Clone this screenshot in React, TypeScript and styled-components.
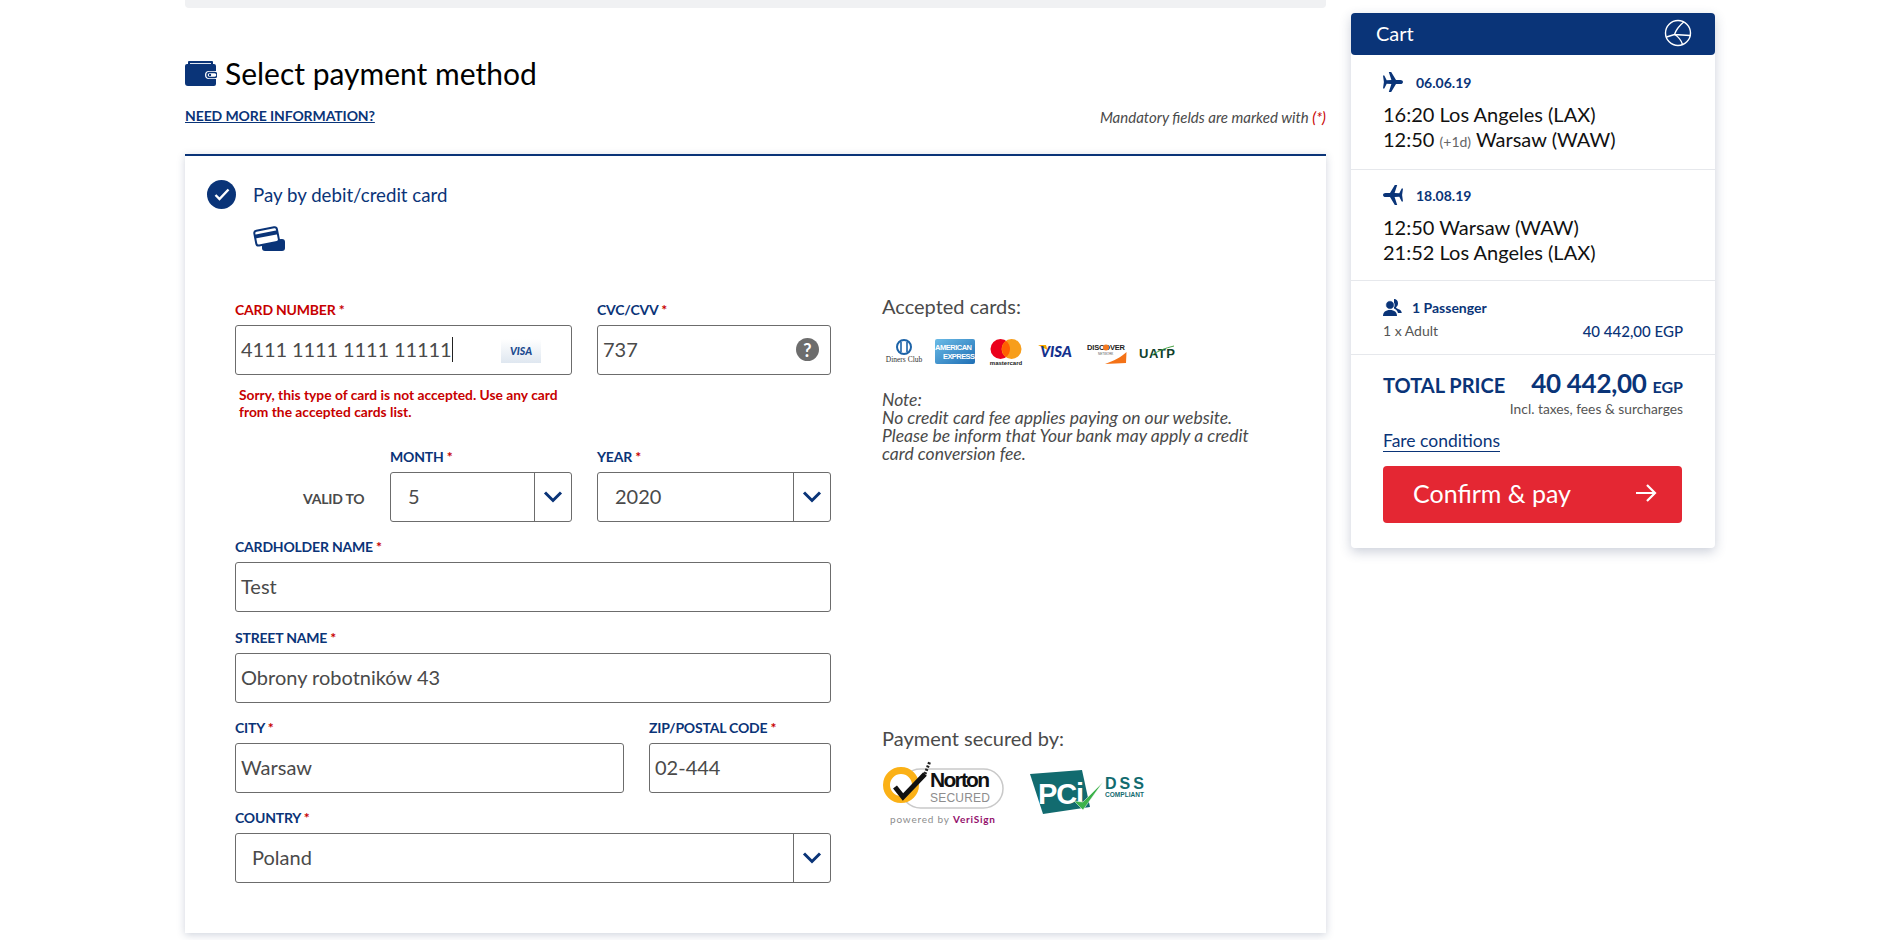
import React from 'react';
import styled, { createGlobalStyle } from 'styled-components';

const NAVY = '#0a3478';
const TEXT = '#4a4a4a';
const RED = '#c70000';

const GlobalStyle = createGlobalStyle`
  html, body {
    margin: 0;
    padding: 0;
    background: #fff;
    overflow: hidden;
    font-family: Lato, "Open Sans", sans-serif;
    color: ${TEXT};
  }
  * { box-sizing: border-box; }
`;

const Page = styled.div`
  display: flex;
  align-items: flex-start;
  gap: 25px;
  width: 1898px;
  height: 940px;
  padding-left: 185px;
`;

const Main = styled.main`
  width: 1141px;
  flex: none;
`;

const TopBar = styled.div`
  height: 8px;
  background: #f0f1f3;
  border-radius: 0 0 4px 4px;
`;

const Title = styled.h1`
  display: flex;
  align-items: center;
  gap: 8px;
  margin: 49px 0 0;
  height: 32px;
  font-size: 30px;
  line-height: 32px;
  font-weight: 400;
  color: #000;
`;

const InfoRow = styled.div`
  display: flex;
  justify-content: space-between;
  align-items: flex-start;
  margin-top: 19px;
  height: 46px;
`;

const InfoLink = styled.a`
  font-size: 14px;
  line-height: 16px;
  font-weight: 700;
  letter-spacing: -0.1px;
  color: ${NAVY};
  text-decoration: underline;
`;

const Mandatory = styled.span`
  margin-top: 1px;
  font-size: 15px;
  line-height: 16px;
  font-style: italic;
  color: ${TEXT};
`;

const Star = styled.span`
  color: ${RED};
`;

const PaymentCard = styled.section`
  height: 779px;
  border-top: 2px solid ${NAVY};
  background: #fff;
  box-shadow: 0 2px 8px rgba(40, 60, 100, 0.22);
  padding: 24px 0 0 22px;
`;

const MethodHead = styled.div`
  display: flex;
  align-items: center;
  gap: 17px;
  height: 28px;
  font-size: 18.7px;
  color: ${NAVY};
`;

const MethodName = styled.span`
  margin-top: 2px;
`;

const CheckDot = styled.span`
  display: flex;
  align-items: center;
  justify-content: center;
  width: 29px;
  height: 29px;
  border-radius: 50%;
  background: ${NAVY};
`;

const MethodIcon = styled.div`
  margin: 17px 0 0 46px;
  height: 26px;
`;

const FormArea = styled.div`
  display: flex;
  margin: 51px 0 0 28px;
`;

const FormColumn = styled.div`
  width: 596px;
  display: flex;
  flex-direction: column;
  flex: none;
`;

const Row = styled.div<{ $top?: number }>`
  display: flex;
  gap: 25px;
  margin-top: ${(p) => p.$top ?? 17}px;
`;

const Field = styled.div<{ $width?: number }>`
  width: ${(p) => (p.$width ? `${p.$width}px` : 'auto')};
  flex: ${(p) => (p.$width ? 'none' : 1)};
`;

const Label = styled.label<{ $error?: boolean }>`
  display: block;
  height: 23px;
  font-size: 14px;
  line-height: 16px;
  font-weight: 700;
  white-space: nowrap;
  letter-spacing: -0.2px;
  color: ${(p) => (p.$error ? RED : NAVY)};
`;

const InputBox = styled.div`
  display: flex;
  align-items: center;
  position: relative;
  height: 50px;
  padding: 0 0 2px 5px;
  border: 1px solid #6c6c6c;
  border-radius: 3px;
  font-size: 20px;
  color: ${TEXT};
  background: #fff;
`;

const CardDigits = styled.span`
  letter-spacing: -0.1px;
  white-space: pre;
`;

const Caret = styled.span`
  display: inline-block;
  width: 1px;
  height: 25px;
  background: #222;
`;

const CardBrandChip = styled.span`
  position: absolute;
  left: 265px;
  top: 13px;
`;

const HelpMark = styled.span`
  position: absolute;
  right: 11px;
  top: 12px;
  width: 23px;
  height: 23px;
  display: flex;
  align-items: center;
  justify-content: center;
  border-radius: 50%;
  background: #6d6d6d;
  color: #fff;
  font-size: 18px;
  font-weight: 700;
`;

const ErrorText = styled.div`
  margin: 11px 0 0 4px;
  width: 330px;
  font-size: 13.8px;
  line-height: 17px;
  font-weight: 700;
  color: ${RED};
`;

const ValidLabel = styled.div`
  width: 155px;
  flex: none;
  padding: 42px 0 0 68px;
  margin-right: -25px;
  font-size: 14px;
  line-height: 16px;
  font-weight: 700;
  letter-spacing: -0.2px;
  color: ${TEXT};
  white-space: nowrap;
`;

const SelectBox = styled(InputBox)<{ $indent?: number }>`
  padding-left: ${(p) => p.$indent ?? 17}px;
`;

const SelectArrow = styled.span`
  position: absolute;
  top: 0;
  right: 0;
  bottom: 0;
  width: 37px;
  display: flex;
  align-items: center;
  justify-content: center;
  border-left: 1px solid #6c6c6c;
`;

const SideColumn = styled.aside`
  width: 370px;
  margin: -8px 0 0 51px;
  display: flex;
  flex-direction: column;
  flex: none;
`;

const SideTitle = styled.div<{ $top?: number }>`
  margin-top: ${(p) => p.$top ?? 0}px;
  font-size: 20px;
  line-height: 24px;
  color: ${TEXT};
`;

const CardLogos = styled.div`
  display: flex;
  align-items: center;
  margin-top: 20px;
  height: 28px;
`;

const Note = styled.p`
  margin: 25px 0 0;
  font-size: 17.5px;
  line-height: 18px;
  font-style: italic;
  color: ${TEXT};
`;

const SecureLogos = styled.div`
  display: flex;
  gap: 24px;
  margin-top: 9px;
`;

const Cart = styled.aside`
  width: 364px;
  flex: none;
  margin-top: 13px;
  height: 535px;
  border-radius: 4px;
  background: #fff;
  box-shadow: 0 4px 12px rgba(40, 60, 100, 0.24);
`;

const CartHead = styled.header`
  display: flex;
  align-items: center;
  justify-content: space-between;
  height: 42px;
  padding: 0 23px 2px 25px;
  border-radius: 4px;
  background: ${NAVY};
  color: #fff;
  font-size: 20px;
`;

const FlightBlock = styled.div<{ $height: number; $top: number }>`
  height: ${(p) => p.$height}px;
  padding: ${(p) => p.$top}px 32px 0;
  border-bottom: 1px solid #e6e8ec;
`;

const FlightDate = styled.div`
  display: flex;
  align-items: center;
  gap: 13px;
  height: 20px;
  font-size: 14px;
  font-weight: 700;
  color: ${NAVY};
`;

const FlightLines = styled.div`
  margin-top: 10px;
  font-size: 20px;
  line-height: 25px;
  color: #111;
`;

const DayShift = styled.small`
  font-size: 14px;
  color: #666;
`;

const PassengerBlock = styled.div`
  height: 74px;
  padding: 16px 32px 0;
  border-bottom: 1px solid #e6e8ec;
`;

const PassengerHead = styled.div`
  display: flex;
  align-items: center;
  gap: 10px;
  height: 20px;
  font-size: 14px;
  font-weight: 700;
  color: ${NAVY};
`;

const PassengerRow = styled.div`
  display: flex;
  justify-content: space-between;
  margin-top: 5px;
  font-size: 14px;
  line-height: 18px;
  color: #555;
`;

const PassengerPrice = styled.span`
  font-size: 15px;
  font-weight: 500;
  color: ${NAVY};
`;

const TotalBlock = styled.div`
  padding: 9px 32px 0;
`;

const TotalRow = styled.div`
  display: flex;
  justify-content: space-between;
  align-items: baseline;
  height: 37px;
  font-size: 20px;
  line-height: 38px;
  font-weight: 700;
  color: ${NAVY};
`;

const TotalPrice = styled.span`
  font-size: 26px;
  letter-spacing: -0.3px;
`;

const Currency = styled.span`
  font-size: 16px;
  margin-left: 6px;
`;

const TaxNote = styled.div`
  text-align: right;
  font-size: 13.8px;
  line-height: 16px;
  color: #555;
`;

const FareLink = styled.a`
  display: inline-block;
  margin-top: 14px;
  font-size: 17.5px;
  line-height: 20px;
  color: ${NAVY};
  border-bottom: 1px solid ${NAVY};
`;

const PayButton = styled.button`
  display: flex;
  align-items: center;
  justify-content: space-between;
  width: 299px;
  height: 57px;
  margin-top: 14px;
  padding: 0 25px 3px 30px;
  border: 0;
  border-radius: 4px;
  background: #e42733;
  color: #fff;
  font-family: inherit;
  font-size: 25px;
`;

const WalletIcon = () => (
  <svg width="32" height="27" viewBox="0 0 32 27">
    <rect x="3" y="1" width="25" height="6" rx="1" fill={NAVY} />
    <rect x="5" y="3" width="21" height="2" fill="#dfe6f2" />
    <path d="M0 6a2 2 0 0 1 2-2h27a2 2 0 0 1 2 2v5H24a4 4 0 0 0 0 8h7v5a2 2 0 0 1-2 2H3a3 3 0 0 1-3-3z" fill={NAVY} />
    <rect x="22" y="12.5" width="10" height="5" rx="2.5" fill="none" stroke={NAVY} strokeWidth="1.4" />
    <circle cx="25" cy="15" r="1.2" fill={NAVY} />
  </svg>
);

const CardsIcon = () => (
  <svg width="32" height="26" viewBox="0 0 32 26">
    <path d="M9 15l20-1a3 3 0 0 1 3 3v6a3 3 0 0 1-3 3H12a3 3 0 0 1-3-3z" fill={NAVY} />
    <g transform="rotate(-11 13 11)">
      <rect x="2" y="4" width="23" height="15" rx="2.5" fill="#fff" stroke={NAVY} strokeWidth="2" />
      <rect x="2" y="7.5" width="23" height="4" fill={NAVY} />
    </g>
  </svg>
);

const Chevron = () => (
  <svg width="20" height="14" viewBox="0 0 20 14">
    <path d="M2 2.5l8 8 8-8" fill="none" stroke={NAVY} strokeWidth="3" />
  </svg>
);

const PlaneIcon = ({ back }: { back?: boolean }) => (
  <svg width="20" height="20" viewBox="0 0 20 20" style={back ? { transform: 'scaleX(-1)' } : undefined}>
    <path
      d="M0 3.500h1.300l2.400 4.700 4.700-.2L5.800 0h2.400l4.800 8 4.400-.1c1.500 0 2.600.9 2.600 2.100s-1.100 2.100-2.600 2.100l-4.400-.1L8.200 20H5.800l2.600-8-4.700-.2-2.400 4.700H0l.9-6.500z"
      fill={NAVY}
    />
  </svg>
);

const PassengerIcon = () => (
  <svg width="19" height="17" viewBox="0 0 19 17">
    <path d="M11 0c2.500 0 4 1.800 4 4.300 0 1.800-.8 3.200-2 4 .2.800.8 1.200 2 1.600 2 .6 3.500 1.500 3.800 4.100H15c-.6-2.300-2-3.600-4-4.500z" fill={NAVY} />
    <circle cx="7" cy="6" r="4.300" fill={NAVY} stroke="#fff" strokeWidth="0.8" />
    <path d="M0 17c0-3.800 2.500-6 7-6s7 2.200 7 6z" fill={NAVY} />
  </svg>
);

const LotLogo = () => (
  <svg width="28" height="28" viewBox="0 0 28 28" fill="none" stroke="#fff" strokeWidth="1.4">
    <circle cx="14" cy="14" r="12.500" />
    <path d="M20 2.800C15.500 6.500 12 11 10.500 15.500L26.300 16.500M10.500 15.500c3.500 2 6.500 5 8 10M10.500 15.500L2.500 18" />
  </svg>
);

const VisaChip = () => (
  <svg width="40" height="24" viewBox="0 0 40 24">
    <defs>
      <linearGradient id="chip" x1="0" y1="0" x2="0" y2="1">
        <stop offset="0" stopColor="#ffffff" />
        <stop offset="1" stopColor="#dfe7f0" />
      </linearGradient>
    </defs>
    <rect width="40" height="24" fill="url(#chip)" />
    <text x="20" y="16" textAnchor="middle" fontFamily="Lato" fontStyle="italic" fontWeight="900" fontSize="10.500" fill="#1a4a8f">
      VISA
    </text>
  </svg>
);

const CardsStrip = () => (
  <svg width="296" height="28" viewBox="0 0 296 28">
    {/* diners */}
    <circle cx="22" cy="9" r="7" fill="#fff" stroke="#1c63a8" strokeWidth="2" />
    <path d="M19 4v10M25 4v10" stroke="#1c63a8" strokeWidth="1.600" />
    <text x="22" y="24" textAnchor="middle" fontFamily="Liberation Serif" fontSize="7.500" fill="#333">
      Diners Club
    </text>
    {/* amex */}
    <defs>
      <linearGradient id="amex" x1="0" y1="0" x2="1" y2="1">
        <stop offset="0" stopColor="#6bbbe6" />
        <stop offset="1" stopColor="#1f6fb5" />
      </linearGradient>
    </defs>
    <rect x="53" y="1" width="40" height="25" rx="2" fill="url(#amex)" />
    <text x="53" y="12" fontFamily="Liberation Sans" fontWeight="700" fontSize="7.500" fill="#fff" textLength="37">
      AMERICAN
    </text>
    <text x="61" y="21" fontFamily="Liberation Sans" fontWeight="700" fontSize="7.500" fill="#fff" textLength="32">
      EXPRESS
    </text>
    {/* mastercard */}
    <circle cx="118.500" cy="11" r="10" fill="#eb001b" />
    <circle cx="129.500" cy="11" r="10" fill="#f79e1b" />
    <path d="M124 3a10 10 0 0 1 0 16 10 10 0 0 1 0-16z" fill="#ff5f00" />
    <text x="124" y="27" textAnchor="middle" fontFamily="Liberation Sans" fontSize="6" fontWeight="700" fill="#222">
      mastercard
    </text>
    {/* visa */}
    <path d="M156 7h8l1.500 5z" fill="#f7a600" />
    <text x="174" y="19" textAnchor="middle" fontFamily="Lato" fontStyle="italic" fontWeight="900" fontSize="15" fill="#14308c">
      VISA
    </text>
    {/* discover */}
    <text x="205" y="12" fontFamily="Liberation Sans" fontWeight="700" fontSize="7.500" fill="#222" textLength="38">
      DISCOVER
    </text>
    <text x="216" y="17" fontFamily="Liberation Sans" fontSize="3" fill="#555">
      NETWORK
    </text>
    <circle cx="224" cy="9.500" r="3" fill="#f47a20" />
    <path d="M223 26l21-1 .5-11c-5 5-13 9-21.500 12z" fill="#f47216" />
    {/* uatp */}
    <text x="257" y="20" fontFamily="Liberation Sans" fontWeight="700" fontSize="13" fill="#103f2d" textLength="36">
      UATP
    </text>
    <path d="M270 17c6-4 13-7 22-9" stroke="#4aa246" strokeWidth="1" fill="none" />
  </svg>
);

const NortonLogo = () => (
  <svg width="124" height="70" viewBox="0 0 124 70">
    <rect x="19" y="10" width="102" height="39" rx="19.500" fill="#fff" stroke="#c9c9c9" strokeWidth="1.500" />
    <circle cx="19" cy="26" r="14.500" fill="#fff" stroke="#fbb116" strokeWidth="7" />
    <path d="M13 28l8 10L43 15" fill="none" stroke="#111" strokeWidth="5" />
    <path d="M43 15l5-13" stroke="#222" strokeWidth="3" strokeDasharray="2 1.500" />
    <text x="48" y="28" fontFamily="Liberation Sans" fontWeight="700" fontSize="21" fill="#111" textLength="60">
      Norton
    </text>
    <text x="48" y="43" fontFamily="Liberation Sans" fontSize="12" fill="#8d8d8d" textLength="60">
      SECURED
    </text>
    <text x="8" y="64" fontFamily="Lato" fontSize="10" fill="#8d8d8d" textLength="59">
      powered by
    </text>
    <text x="71" y="64" fontFamily="Lato" fontWeight="700" fontSize="10" fill="#93106b" textLength="42">
      VeriSign
    </text>
  </svg>
);

const PciLogo = () => (
  <svg width="116" height="50" viewBox="0 0 116 50" style={{ marginTop: 8 }}>
    <path d="M0 7l52-4 8 37-47 7z" fill="#126b6f" />
    <text x="8" y="37" fontFamily="Liberation Sans" fontWeight="700" fontSize="29" fill="#fff" textLength="46">
      PCi
    </text>
    <path d="M44 34l9 9L73 15 53 35z" fill="#3cb24a" stroke="#fff" strokeWidth="0.500" />
    <text x="75" y="22" fontFamily="Liberation Sans" fontWeight="700" fontSize="16" fill="#126b6f" textLength="39">
      DSS
    </text>
    <text x="75" y="30" fontFamily="Liberation Sans" fontWeight="700" fontSize="6.500" fill="#126b6f" textLength="39">
      COMPLIANT
    </text>
  </svg>
);

const Req = () => <Star> *</Star>;

export default function App() {
  return (
    <Page>
      <GlobalStyle />
      <Main>
        <TopBar />
        <Title>
          <WalletIcon />
          Select payment method
        </Title>
        <InfoRow>
          <InfoLink>NEED MORE INFORMATION?</InfoLink>
          <Mandatory>
            Mandatory fields are marked with <Star>(*)</Star>
          </Mandatory>
        </InfoRow>
        <PaymentCard>
          <MethodHead>
            <CheckDot>
              <svg width="16" height="13" viewBox="0 0 16 13">
                <path d="M1.500 7l4 4 9-9.500" fill="none" stroke="#fff" strokeWidth="2.400" />
              </svg>
            </CheckDot>
            <MethodName>Pay by debit/credit card</MethodName>
          </MethodHead>
          <MethodIcon>
            <CardsIcon />
          </MethodIcon>
          <FormArea>
            <FormColumn>
              <Row $top={0}>
                <Field $width={337}>
                  <Label $error>
                    CARD NUMBER<Req />
                  </Label>
                  <InputBox>
                    <CardDigits>4111 1111 1111 11111</CardDigits>
                    <Caret />
                    <CardBrandChip>
                      <VisaChip />
                    </CardBrandChip>
                  </InputBox>
                  <ErrorText>Sorry, this type of card is not accepted. Use any card from the accepted cards list.</ErrorText>
                </Field>
                <Field $width={234}>
                  <Label>
                    CVC/CVV<Req />
                  </Label>
                  <InputBox>
                    737
                    <HelpMark>?</HelpMark>
                  </InputBox>
                </Field>
              </Row>
              <Row $top={29}>
                <ValidLabel>VALID TO</ValidLabel>
                <Field $width={182}>
                  <Label>
                    MONTH<Req />
                  </Label>
                  <SelectBox>
                    5
                    <SelectArrow>
                      <Chevron />
                    </SelectArrow>
                  </SelectBox>
                </Field>
                <Field $width={234}>
                  <Label>
                    YEAR<Req />
                  </Label>
                  <SelectBox>
                    2020
                    <SelectArrow>
                      <Chevron />
                    </SelectArrow>
                  </SelectBox>
                </Field>
              </Row>
              <Row>
                <Field>
                  <Label>
                    CARDHOLDER NAME<Req />
                  </Label>
                  <InputBox>Test</InputBox>
                </Field>
              </Row>
              <Row $top={18}>
                <Field>
                  <Label>
                    STREET NAME<Req />
                  </Label>
                  <InputBox>Obrony robotników 43</InputBox>
                </Field>
              </Row>
              <Row>
                <Field>
                  <Label>
                    CITY<Req />
                  </Label>
                  <InputBox>Warsaw</InputBox>
                </Field>
                <Field $width={182}>
                  <Label>
                    ZIP/POSTAL CODE<Req />
                  </Label>
                  <InputBox>02-444</InputBox>
                </Field>
              </Row>
              <Row>
                <Field>
                  <Label>
                    COUNTRY<Req />
                  </Label>
                  <SelectBox $indent={16}>
                    Poland
                    <SelectArrow>
                      <Chevron />
                    </SelectArrow>
                  </SelectBox>
                </Field>
              </Row>
            </FormColumn>
            <SideColumn>
              <SideTitle>Accepted cards:</SideTitle>
              <CardLogos>
                <CardsStrip />
              </CardLogos>
              <Note>
                Note:
                <br />
                No credit card fee applies paying on our website.
                <br />
                Please be inform that Your bank may apply a credit card conversion fee.
              </Note>
              <SideTitle $top={263}>Payment secured by:</SideTitle>
              <SecureLogos>
                <NortonLogo />
                <PciLogo />
              </SecureLogos>
            </SideColumn>
          </FormArea>
        </PaymentCard>
      </Main>
      <Cart>
        <CartHead>
          Cart
          <LotLogo />
        </CartHead>
        <FlightBlock $height={115} $top={17}>
          <FlightDate>
            <PlaneIcon />
            06.06.19
          </FlightDate>
          <FlightLines>
            16:20 Los Angeles (LAX)
            <br />
            12:50 <DayShift>(+1d)</DayShift> Warsaw (WAW)
          </FlightLines>
        </FlightBlock>
        <FlightBlock $height={111} $top={15}>
          <FlightDate>
            <PlaneIcon back />
            18.08.19
          </FlightDate>
          <FlightLines>
            12:50 Warsaw (WAW)
            <br />
            21:52 Los Angeles (LAX)
          </FlightLines>
        </FlightBlock>
        <PassengerBlock>
          <PassengerHead>
            <PassengerIcon />1 Passenger
          </PassengerHead>
          <PassengerRow>
            1 x Adult
            <PassengerPrice>40 442,00 EGP</PassengerPrice>
          </PassengerRow>
        </PassengerBlock>
        <TotalBlock>
          <TotalRow>
            TOTAL PRICE
            <span>
              <TotalPrice>40 442,00</TotalPrice>
              <Currency>EGP</Currency>
            </span>
          </TotalRow>
          <TaxNote>Incl. taxes, fees &amp; surcharges</TaxNote>
          <FareLink>Fare conditions</FareLink>
          <PayButton>
            Confirm &amp; pay
            <svg width="22" height="20" viewBox="0 0 22 20" fill="none" stroke="#fff" strokeWidth="2.200">
              <path d="M1 10h19M12 2l8 8-8 8" />
            </svg>
          </PayButton>
        </TotalBlock>
      </Cart>
    </Page>
  );
}
